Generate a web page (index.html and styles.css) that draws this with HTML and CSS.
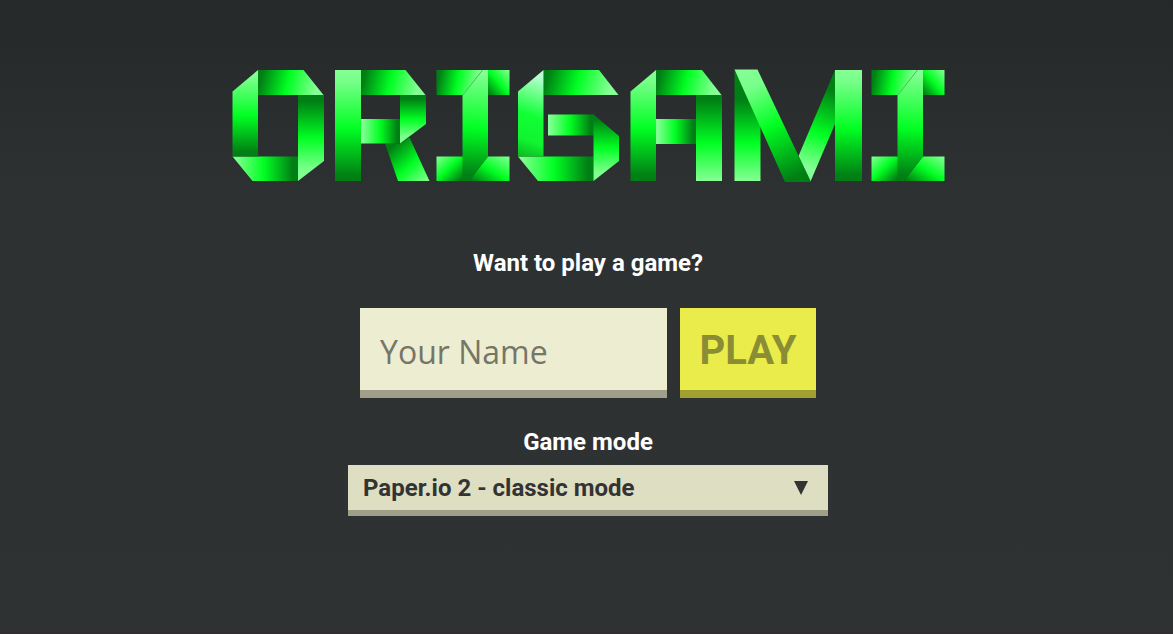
FILE: index.html
```html
<!DOCTYPE html>
<html lang="en">
<head>
<meta charset="utf-8">
<meta name="viewport" content="width=device-width, initial-scale=1">
<title>Origami</title>
<link rel="stylesheet" href="styles.css">
</head>
<body>
<main class="home">
  <h1 class="logo">
    <svg class="logo-art" viewBox="232 69 713 114" role="img" aria-label="Origami">
      <defs>
        <linearGradient id="down" x1="0" y1="0" x2="0" y2="1"><stop offset="0" stop-color="#85ff95"/><stop offset=".1" stop-color="#78ff8a"/><stop offset=".53" stop-color="#00ff22"/><stop offset=".95" stop-color="#008014"/></linearGradient>
        <linearGradient id="up" x1="0" y1="1" x2="0" y2="0"><stop offset="0" stop-color="#85ff95"/><stop offset=".15" stop-color="#78ff8a"/><stop offset=".5" stop-color="#00ff22"/><stop offset=".92" stop-color="#008014"/></linearGradient>
        <linearGradient id="up-tall" gradientUnits="userSpaceOnUse" x1="0" y1="181" x2="0" y2="95"><stop offset="0" stop-color="#85ff95"/><stop offset=".44" stop-color="#00ff22"/><stop offset=".94" stop-color="#008014"/></linearGradient>
        <linearGradient id="right" x1="0" y1="0" x2="1" y2="0.1"><stop offset=".08" stop-color="#008014"/><stop offset=".5" stop-color="#00ff22"/><stop offset=".95" stop-color="#85ff95"/></linearGradient>
        <linearGradient id="left" x1="1" y1="0" x2="0" y2="0"><stop offset=".08" stop-color="#008014"/><stop offset=".52" stop-color="#00ff22"/><stop offset=".97" stop-color="#85ff95"/></linearGradient>
        <linearGradient id="rise" x1="0" y1="1" x2="1" y2="0"><stop offset=".05" stop-color="#008014"/><stop offset=".5" stop-color="#00ff22"/><stop offset="1" stop-color="#85ff95"/></linearGradient>
        <linearGradient id="fall" x1="0" y1="0" x2="1" y2="1"><stop offset="0" stop-color="#85ff95"/><stop offset=".48" stop-color="#00ff22"/><stop offset=".92" stop-color="#008014"/></linearGradient>
        <linearGradient id="leg" x1=".1" y1="0" x2="1" y2="1"><stop offset=".15" stop-color="#008014"/><stop offset=".58" stop-color="#00ff22"/><stop offset="1" stop-color="#85ff95"/></linearGradient>
        <linearGradient id="frost" x1="0.3" y1="0" x2=".2" y2="1"><stop offset=".02" stop-color="#b8ffd0"/><stop offset=".5" stop-color="#10ff35"/><stop offset=".8" stop-color="#10f430"/><stop offset="1" stop-color="#0bbd24"/></linearGradient>
        <linearGradient id="slope" gradientUnits="userSpaceOnUse" x1="745" y1="70" x2="798" y2="182"><stop offset="0" stop-color="#85ff95"/><stop offset=".15" stop-color="#78ff8a"/><stop offset=".5" stop-color="#00ff22"/><stop offset=".95" stop-color="#008014"/></linearGradient>
        <linearGradient id="climb" gradientUnits="userSpaceOnUse" x1="833" y1="91" x2="803" y2="175"><stop offset="0" stop-color="#008014"/><stop offset=".5" stop-color="#00ff22"/><stop offset=".9" stop-color="#85ff95"/></linearGradient>
        <linearGradient id="stem" gradientUnits="userSpaceOnUse" x1="480" y1="70" x2="472" y2="181"><stop offset=".02" stop-color="#85ff95"/><stop offset=".53" stop-color="#00ff22"/><stop offset=".95" stop-color="#008014"/></linearGradient>
        <g id="letter-i">
          <path fill="url(#right)" d="M436.5 70H482.5L463 95H436.5z"/>
          <path fill="url(#rise)" d="M488 70h21.500v25H488z"/>
          <path fill="url(#fall)" d="M436.500 156.500H463V181h-26.500z"/>
          <path fill="url(#rise)" d="M488 156.500h21.500V181H469z"/>
          <path fill="url(#stem)" d="M482.500 70H488v86.500L469 181h-6.500V95z"/>
          <path stroke="#46b055" stroke-width=".7" d="M482.500 70 463 95"/>
        </g>
      </defs>
      <g>
        <path fill="url(#right)" d="M258 70h45.500l20 25H258z"/>
        <path fill="url(#up)" d="M298 95h26v66l-26 20z"/>
        <path fill="url(#left)" d="M232.500 156.500H298V181h-45.500z"/>
        <path fill="url(#down)" d="M232.500 91.500 258 70v86.500h-25.500z"/>
      </g>
      <g>
        <path fill="url(#right)" d="M361 70h44.500l20 25H361z"/>
        <path fill="url(#leg)" d="M385 143.500h15l9.500-6 20 43.500H398z"/>
        <path fill="url(#left)" d="M361 119h39.500v24.500H361z"/>
        <path fill="url(#up)" d="M400 95h26v29l-26 19.500z"/>
        <path fill="url(#down)" d="M335 70h26v111h-26z"/>
      </g>
      <use href="#letter-i"/>
      <g>
        <path fill="url(#right)" d="M543.500 70H599l19.500 25h-75z"/>
        <path fill="url(#left)" d="M518 156.500h75.500V181H538z"/>
        <path fill="url(#left)" d="M548 114.500h46v21h-46z"/>
        <path fill="url(#up)" d="M593.500 114.500 619 136v25l-25.500 20z"/>
        <path fill="url(#frost)" d="M518 91.500 543.500 70v86.500H518z"/>
      </g>
      <g>
        <path fill="url(#right)" d="M656 70h46l19.500 25H656z"/>
        <path fill="url(#left)" d="M656 119h40v25h-40z"/>
        <path fill="url(#up-tall)" d="M696 95h26v86h-26z"/>
        <path fill="url(#down)" d="M630.500 91.500 656 70v111h-25.500z"/>
      </g>
      <g>
        <path fill="url(#up-tall)" d="M734.500 70l26 50v61h-26z"/>
        <path fill="url(#climb)" d="M835 70v54l-24.500 57.500-12-25.500z"/>
        <path fill="url(#slope)" d="M734.500 69.500h23L811 182h-26z"/>
        <path fill="url(#down)" d="M835 70h27v111h-27z"/>
      </g>
      <use href="#letter-i" x="435"/>
    </svg>
  </h1>
  <form class="start">
    <label class="caption" for="name">Want to play a game?</label>
    <div class="entry">
      <input class="name" id="name" type="text" placeholder="Your Name">
      <button class="play" type="button">PLAY</button>
    </div>
    <label class="caption" for="mode">Game mode</label>
    <div class="mode">
      <select class="mode-list" id="mode">
        <option>Paper.io 2 - classic mode</option>
      </select>
      <svg class="mode-arrow" viewBox="0 0 14 14" aria-hidden="true"><path d="M0 0h14L7 14z"/></svg>
    </div>
  </form>
</main>
</body>
</html>
```
FILE: styles.css
```css
* {
  box-sizing: border-box;
}

body {
  margin: 0;
  min-height: 100vh;
  display: flex;
  background: linear-gradient(#26292a, #2d3132 200px, #2e3233);
  border-bottom: 2px solid #332d31;
  font-family: Roboto, "Noto Sans", sans-serif;
}

.home {
  flex: 1;
  display: flex;
  flex-direction: column;
  align-items: center;
  padding: 69px 0 48px 3px;
}

.logo {
  margin: 0 0 64px;
  width: 100%;
  max-width: 713px;
}

.logo-art {
  display: block;
  width: 100%;
}

.start {
  width: 100%;
  max-width: 480px;
  display: flex;
  flex-direction: column;
  align-items: center;
}

.caption {
  color: #fff;
  font-size: 24px;
  line-height: 32px;
  font-weight: 700;
}

.entry {
  display: flex;
  gap: 13px;
  width: 100%;
  padding: 0 12px;
  margin: 29px 0 28px;
}

.name,
.play {
  height: 90px;
  border: 0;
  border-radius: 0;
}

.name {
  flex: 1;
  min-width: 0;
  padding: 4px 20px 0;
  background: #ededd1;
  border-bottom: 8px solid #a0a08a;
  color: #333;
  font: 32px "Open Sans", "Noto Sans", sans-serif;
}

.name::placeholder {
  color: #757568;
  opacity: 1;
}

.play {
  flex: none;
  width: 136px;
  padding: 2px 0 0;
  background: #e9ec4a;
  border-bottom: 8px solid #a0a030;
  color: #8b8d34;
  font: 700 40px Roboto, sans-serif;
}

.mode {
  display: grid;
  align-items: center;
  width: 100%;
  margin-top: 7px;
  background: #dedec2;
  border-bottom: 6px solid #a09f89;
}

.mode-list,
.mode-arrow {
  grid-area: 1 / 1;
}

.mode-list {
  appearance: none;
  width: 100%;
  height: 45px;
  padding: 0 48px 0 15px;
  border: 0;
  border-radius: 0;
  background: none;
  color: #333;
  font: 700 24px Roboto, sans-serif;
}

.mode-arrow {
  justify-self: end;
  width: 14px;
  margin-right: 20px;
  fill: #333;
  pointer-events: none;
}
```
